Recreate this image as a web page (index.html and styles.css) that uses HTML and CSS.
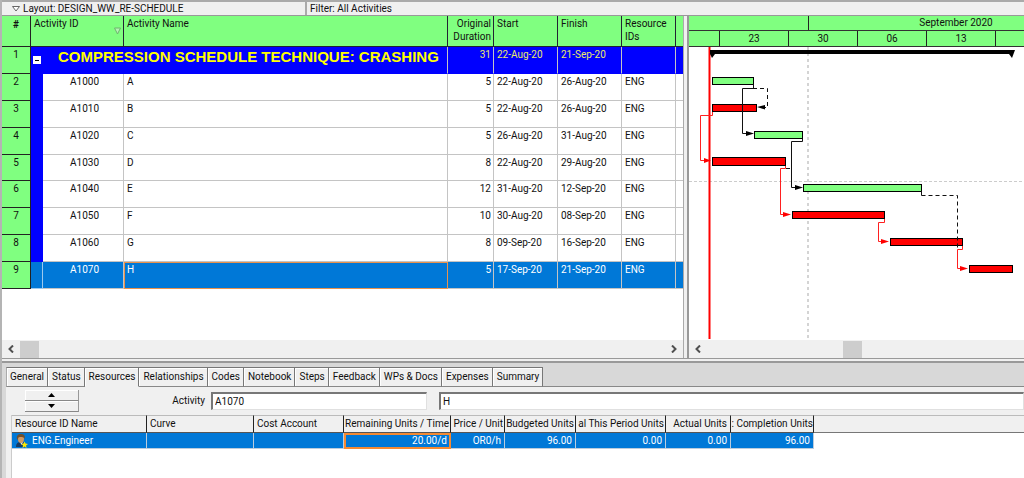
FILE: index.html
```html
<!DOCTYPE html>
<html lang="en">
<head>
<meta charset="utf-8">
<title>Activities</title>
<link rel="stylesheet" href="styles.css">
</head>
<body>
<header class="topbar">
  <button class="layout-btn"><svg width="8" height="6" viewBox="0 0 8 6"><path d="M0.5 0.5H7.5L4 5Z" fill="#fff" stroke="#666"/></svg>Layout: DESIGN_WW_RE-SCHEDULE</button>
  <button class="filter-btn">Filter: All Activities</button>
</header>
<main class="work">
  <section class="pane">
    <div class="pane-body">
    <table class="acts">
      <colgroup><col class="w-num"><col class="w-band"><col class="w-id"><col><col class="w-dur"><col class="w-date"><col class="w-date"><col class="w-res"><col class="w-end"></colgroup>
      <thead>
        <tr><th class="num">#</th><th colspan="2"><div class="sorted">Activity ID<svg width="7" height="8" viewBox="0 0 7 8"><path d="M0.5 1H6.5L3.5 7Z" fill="#b4f5b4" stroke="#6fb36f"/></svg></div></th><th>Activity Name</th><th class="right">Original Duration</th><th>Start</th><th>Finish</th><th>Resource IDs</th><th></th></tr>
      </thead>
      <tbody>
        <tr class="group"><td class="num">1</td><td class="band"><button class="collapse" aria-label="Collapse"></button></td><td colspan="2" class="title">COMPRESSION SCHEDULE TECHNIQUE: CRASHING</td><td class="right">31</td><td>22-Aug-20</td><td>21-Sep-20</td><td></td><td></td></tr>
        <tr><td class="num">2</td><td class="band"></td><td class="id">A1000</td><td>A</td><td class="right">5</td><td>22-Aug-20</td><td>26-Aug-20</td><td>ENG</td><td></td></tr>
        <tr><td class="num">3</td><td class="band"></td><td class="id">A1010</td><td>B</td><td class="right">5</td><td>22-Aug-20</td><td>26-Aug-20</td><td>ENG</td><td></td></tr>
        <tr><td class="num">4</td><td class="band"></td><td class="id">A1020</td><td>C</td><td class="right">5</td><td>26-Aug-20</td><td>31-Aug-20</td><td>ENG</td><td></td></tr>
        <tr><td class="num">5</td><td class="band"></td><td class="id">A1030</td><td>D</td><td class="right">8</td><td>22-Aug-20</td><td>29-Aug-20</td><td>ENG</td><td></td></tr>
        <tr><td class="num">6</td><td class="band"></td><td class="id">A1040</td><td>E</td><td class="right">12</td><td>31-Aug-20</td><td>12-Sep-20</td><td>ENG</td><td></td></tr>
        <tr><td class="num">7</td><td class="band"></td><td class="id">A1050</td><td>F</td><td class="right">10</td><td>30-Aug-20</td><td>08-Sep-20</td><td>ENG</td><td></td></tr>
        <tr><td class="num">8</td><td class="band"></td><td class="id">A1060</td><td>G</td><td class="right">8</td><td>09-Sep-20</td><td>16-Sep-20</td><td>ENG</td><td></td></tr>
        <tr class="selected"><td class="num">9</td><td class="band"></td><td class="id">A1070</td><td class="focus">H</td><td class="right">5</td><td>17-Sep-20</td><td>21-Sep-20</td><td>ENG</td><td></td></tr>
      </tbody>
    </table>
    </div>
    <div class="scroll">
      <button aria-label="Scroll left"><svg width="6" height="8" viewBox="0 0 6 8"><path d="M5 0.5L1.5 4L5 7.5" fill="none" stroke="#505050" stroke-width="2"/></svg></button>
      <div class="thumb"></div>
      <button class="push" aria-label="Scroll right"><svg width="6" height="8" viewBox="0 0 6 8"><path d="M1 0.5L4.5 4L1 7.5" fill="none" stroke="#505050" stroke-width="2"/></svg></button>
    </div>
  </section>
  <div class="splitter"></div>
  <section class="gantt">
    <div class="months"><span></span><span>September 2020</span></div>
    <div class="weeks"><span></span><span>23</span><span>30</span><span>06</span><span>13</span><span></span></div>
    <div class="chart">
    <svg width="100%" height="100%">
      <g transform="translate(-689 -47)">
        <path d="M808 47V339" stroke="#d4d4d4" stroke-width="2" stroke-dasharray="3 3"/>
        <path d="M689 181.5H3000" stroke="#ccc" stroke-dasharray="3 2"/>
        <path d="M709.5 47V339" stroke="#f00" stroke-width="2"/>
        <path d="M710 50H1015L1012 58L1009 54H715L712 58L710 54Z"/>
        <g stroke="#000">
          <g fill="#80ff80">
            <rect x="712.5" y="77.5" width="41" height="7"/>
            <rect x="754.5" y="131.5" width="48" height="7"/>
            <rect x="803.5" y="184.5" width="118" height="7"/>
          </g>
          <g fill="#f00">
            <rect x="712.5" y="104.5" width="44" height="7"/>
            <rect x="712.5" y="157.5" width="73" height="8"/>
            <rect x="792.5" y="211.5" width="92" height="7"/>
            <rect x="890.5" y="238.5" width="72" height="7"/>
            <rect x="969.5" y="265.5" width="43" height="7"/>
          </g>
        </g>
        <g fill="none" stroke="#111">
          <path d="M753.5 84V88.5H742.5V133.5H748M802.5 139V141.5H791.5V187.5H798M921.5 191V195.5"/>
          <path d="M753 88.5H767.5V107.5H762M786 168.5H792M921.5 195.5H957.5V248" stroke-dasharray="4 3"/>
        </g>
        <path d="M746 131L754 133.5L746 136ZM795 185L803 187.5L795 190ZM765 105L757 107L765 109.5Z"/>
        <path d="M712.5 112V115.5H700.5V160.5H706M785.5 166V168.5H780.5V214.5H786M884.5 219V222.5H878.5V241.5H884M962.5 246V249.5H957.5V268.5H963" fill="none" stroke="#ff2020"/>
        <path d="M704 158L711 160.5L704 163ZM783 212L791 214.5L783 217ZM881 239L889 241.5L881 244ZM960 266L968 268.5L960 271Z" fill="#f00"/>
      </g>
    </svg>
    </div>
    <div class="scroll">
      <button aria-label="Scroll left"><svg width="6" height="8" viewBox="0 0 6 8"><path d="M5 0.5L1.5 4L5 7.5" fill="none" stroke="#505050" stroke-width="2"/></svg></button>
      <div class="thumb mid"></div>
    </div>
  </section>
</main>
<section class="details">
  <nav class="tabs">
    <button>General</button><button>Status</button><button class="active">Resources</button><button>Relationships</button><button>Codes</button><button>Notebook</button><button>Steps</button><button>Feedback</button><button>WPs &amp; Docs</button><button>Expenses</button><button>Summary</button>
  </nav>
  <div class="sheet">
    <div class="form">
      <div class="spin">
        <button aria-label="Previous"><svg width="7" height="4" viewBox="0 0 7 4"><path d="M0 4L3.5 0L7 4Z"/></svg></button>
        <button aria-label="Next"><svg width="7" height="4" viewBox="0 0 7 4"><path d="M0 0L3.5 4L7 0Z"/></svg></button>
      </div>
      <label for="act">Activity</label>
      <input id="act" class="code" value="A1070">
      <input class="name" aria-label="Activity name" value="H">
    </div>
    <div class="res-wrap">
    <div class="res-head"></div>
    <table class="res">
      <colgroup><col class="r1"><col class="r2"><col class="r3"><col class="r4"><col class="r5"><col class="r6"><col class="r7"><col class="r8"><col class="r9"></colgroup>
      <thead><tr><th>Resource ID Name</th><th>Curve</th><th>Cost Account</th><th class="right tight">Remaining Units / Time</th><th class="right tight">Price / Unit</th><th class="right tight">Budgeted Units</th><th class="right tight">al This Period Units</th><th class="right">Actual Units</th><th class="right flush">: Completion Units</th></tr></thead>
      <tbody><tr><td><div class="who"><svg width="13" height="14" viewBox="0 0 13 14"><path d="M1 13C1 9 3 8 6 8S11 9 11 13Z" fill="#173b63"/><path d="M5 8L6.500 11L8 8Z" fill="#dcecff"/><ellipse cx="6" cy="5" rx="3" ry="4" fill="#d39a62"/><path d="M2 5C1 1 4 0 6 0S11 1 9.500 5C9 3 7 3 5 3C3 3 3 4 3 6Z" fill="#70502f"/><path d="M9.500 7.500L10.500 9.500L13 10L11 11.500L11.500 14L9.500 12.500L7.500 14L8 11.500L6.500 10L8.500 9.500Z" fill="#ffe800"/></svg>ENG.Engineer</div></td><td></td><td></td><td class="right focus">20.00/d</td><td class="right">OR0/h</td><td class="right">96.00</td><td class="right">0.00</td><td class="right">0.00</td><td class="right">96.00</td></tr></tbody>
    </table>
    </div>
  </div>
</section>
</body>
</html>
```

FILE: styles.css
```css
* { box-sizing: border-box; }
body {
  margin: 0;
  min-height: 100vh;
  display: flex;
  flex-direction: column;
  background: #f0f0f0;
  border-left: 2px solid #b4b4b4;
  font: 10px/12px Roboto, "Liberation Sans", sans-serif;
  color: #111;
  overflow-x: hidden;
}
button, input { font: inherit; color: inherit; border: 0; padding: 0; margin: 0; background: none; }
svg { display: block; flex: none; }
.right { text-align: right; }

.topbar { display: flex; height: 16px; border-top: 2px solid #aaa; border-bottom: 1px solid #999; }
.topbar button { text-align: left; }
.layout-btn { width: 305px; padding-left: 10px; display: flex; align-items: center; gap: 3px; border-right: 2px solid #aaa; }
.filter-btn { padding-left: 3px; }

.work { display: grid; grid-template-columns: 681fr 6px 335fr; height: 343px; border-bottom: 1px solid #999; }
.pane, .gantt { display: flex; flex-direction: column; min-width: 0; }
.pane-body, .chart { flex: 1; min-height: 0; background: #fff; overflow: hidden; }
.splitter { border-left: 1px solid #aaa; border-right: 2px solid #999; }

.acts { width: 100%; height: 273px; table-layout: fixed; border-collapse: separate; border-spacing: 0; }
.w-num { width: 29px; }
.w-band { width: 12px; }
.w-id { width: 81px; }
.w-dur { width: 46px; }
.w-date { width: 64px; }
.w-res { width: 54px; }
.w-end { width: 7px; }
.acts th, .acts td { vertical-align: top; padding: 2px 2px 0 3px; border-right: 1px solid #c4c4c4; border-bottom: 1px solid #c4c4c4; white-space: nowrap; overflow: hidden; }
.acts td { height: 26px; }
.acts th { height: 31px; padding-top: 1px; line-height: 13px; background: #80ff80; border-color: #223; font-weight: 400; text-align: left; white-space: normal; }
.acts th.right { text-align: right; }
.acts td.num, .acts th.num { padding: 2px 0 0; background: #80ff80; text-align: center; border-right-color: #222; border-bottom-color: #222; color: #111; }
.acts th.num { font-weight: 700; }
.acts th:last-child, .acts td:last-child { border-right: 0; padding: 0; }
.acts td.band { background: #00f; border-color: #00f; padding: 0; }
.acts td.id { padding-left: 27px; }
.sorted { display: flex; justify-content: space-between; }
.sorted svg { margin-top: 10px; }
.acts .group td { background: #00f; color: #e9e96a; border-bottom-color: #00f; }
.acts .group td.num { background: #80ff80; color: #111; border-bottom-color: #222; }
.acts .group td.title { color: #ff0; font: 700 15px/16px "Liberation Sans", Arial, sans-serif; padding-left: 15px; }
.collapse { display: block; width: 8px; height: 8px; margin: 9px 0 0 2px; background: linear-gradient(#000, #000) center / 4px 1px no-repeat #fff; }
.acts .selected td { background: #0078d7; color: #fff; }
.acts .selected td.num { background: #80ff80; color: #111; }
.acts .selected td.band { border-right-color: #9cc9ee; border-bottom-color: #9cc9ee; }
.acts .selected td.focus { outline: 1px solid #e9924c; outline-offset: -1px; }

.scroll { display: flex; align-items: center; height: 18px; background: #f0f0f0; }
.scroll button { width: 18px; height: 18px; display: grid; place-items: center; }
.push { margin-left: auto; }
.thumb { width: 19px; height: 17px; background: #cdcdcd; }
.mid { margin-left: 136px; }

.months, .weeks { display: grid; background: #80ff80; border-bottom: 1px solid #333; text-align: center; }
.months { grid-template-columns: 119px minmax(295px, 1fr); height: 15px; line-height: 14px; overflow: hidden; }
.weeks { grid-template-columns: 30px repeat(4, 69px) 1fr; height: 16px; line-height: 15px; }
.months span + span, .weeks span + span { border-left: 1px solid #222; }

.details { flex: 1; display: flex; flex-direction: column; margin-top: 2px; padding-left: 4px; border-top: 2px solid #999; background: #d8d8d8; }
.tabs { display: flex; padding-top: 4px; }
.tabs button { height: 20px; padding: 0 3px 0 4px; background: #f0f0f0; border-top: 1px solid #777; border-right: 1px solid #777; border-bottom: 1px solid #888; box-shadow: inset 1px 1px #fff; }
.tabs button:first-child { padding-left: 3px; border-left: 1px solid #aaa; }
.tabs .active { border-bottom-color: #f0f0f0; }
.tabs::after { content: ""; flex: 1; border-bottom: 1px solid #888; }
.sheet { flex: 1; display: flex; flex-direction: column; padding-left: 5px; background: #f0f0f0; }
.form { display: flex; align-items: center; height: 28px; }
.spin { width: 54px; margin-left: 14px; display: grid; }
.spin button { height: 11px; display: grid; place-items: center; border-right: 1px solid #999; border-bottom: 1px solid #888; box-shadow: inset 1px 1px #fff; }
.form label { width: 132px; padding-right: 6px; text-align: right; }
.form input { height: 18px; padding: 0 2px; background: #fff; border: 1px solid #e0e0e0; border-top: 2px solid #777; border-left: 2px solid #777; }
.code { width: 216px; }
.name { flex: 1; min-width: 0; margin-left: 12px; }
.res-wrap { flex: 1; display: grid; background: #fff; border-left: 1px solid #ccc; align-items: start; }
.res-head, .res { grid-area: 1 / 1; }
.res-head { height: 18px; background: #f0f0f0; border-top: 1px solid #bbb; border-bottom: 1px solid #777; }
.res { width: 802px; table-layout: fixed; border-collapse: separate; border-spacing: 0; }
.r1 { width: 135px; }
.r2 { width: 107px; }
.r3 { width: 90px; }
.r4 { width: 107px; }
.r5 { width: 54px; }
.r6 { width: 71px; }
.r7 { width: 90px; }
.r8 { width: 65px; }
.r9 { width: 83px; }
.res th, .res td { padding: 0 3px; white-space: nowrap; overflow: hidden; border-right: 1px solid #bcd; }
.res th { height: 18px; font-weight: 400; text-align: left; border-right-color: #222; border-bottom: 1px solid #555; border-top: 1px solid #bbb; }
.res th.right { text-align: right; }
.res th.tight { padding: 0 1px; }
.res th.flush { padding: 0; }
.res td { height: 16px; background: #0078d7; color: #fff; border-bottom: 1px solid #bcd; }
.res td.focus { outline: 2px solid #f58a32; outline-offset: -2px; }
.who { display: flex; align-items: center; gap: 4px; }
```
